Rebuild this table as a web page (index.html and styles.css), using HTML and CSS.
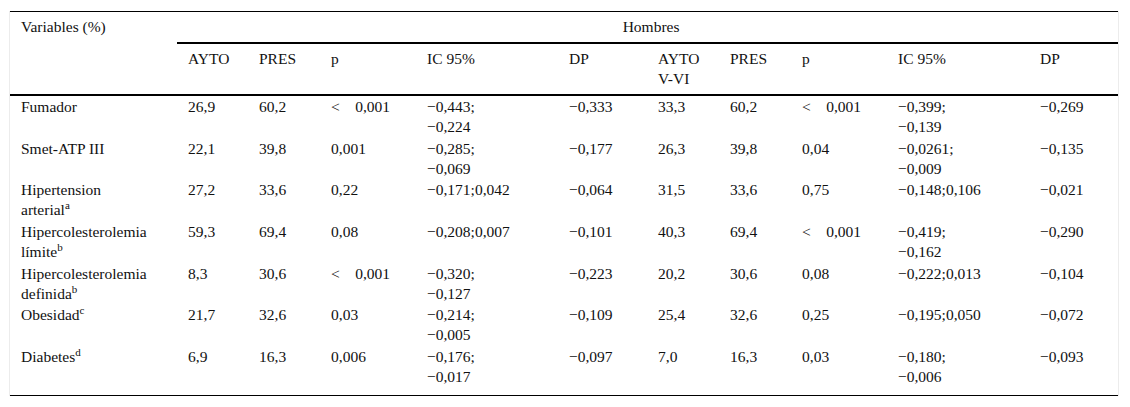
FILE: index.html
```html
<!DOCTYPE html>
<html lang="es">
<head>
<meta charset="utf-8">
<title>Tabla</title>
<link rel="stylesheet" href="styles.css">
</head>
<body>
<div class="wrap">
<table class="data">
  <colgroup>
    <col class="c-var">
    <col class="c-a"><col class="c-b"><col class="c-p"><col class="c-ic"><col class="c-dp">
    <col class="c-b"><col class="c-b"><col class="c-p"><col class="c-ic"><col class="c-dp">
  </colgroup>
  <thead>
    <tr class="h1">
      <th rowspan="2" class="var">Variables (%)</th>
      <th colspan="10" class="group">Hombres</th>
    </tr>
    <tr class="h2">
      <th>AYTO</th><th>PRES</th><th>p</th><th>IC 95%</th><th>DP</th>
      <th>AYTO<br>V-VI</th><th>PRES</th><th>p</th><th>IC 95%</th><th>DP</th>
    </tr>
  </thead>
  <tbody>
    <tr>
      <td>Fumador</td><td>26,9</td><td>60,2</td><td>&lt;&nbsp;&nbsp;&nbsp; 0,001</td><td>−0,443;<br>−0,224</td><td>−0,333</td>
      <td>33,3</td><td>60,2</td><td>&lt;&nbsp;&nbsp;&nbsp; 0,001</td><td>−0,399;<br>−0,139</td><td>−0,269</td>
    </tr>
    <tr>
      <td>Smet-ATP III</td><td>22,1</td><td>39,8</td><td>0,001</td><td>−0,285;<br>−0,069</td><td>−0,177</td>
      <td>26,3</td><td>39,8</td><td>0,04</td><td>−0,0261;<br>−0,009</td><td>−0,135</td>
    </tr>
    <tr>
      <td>Hipertension<br>arterial<sup>a</sup></td><td>27,2</td><td>33,6</td><td>0,22</td><td>−0,171;0,042</td><td>−0,064</td>
      <td>31,5</td><td>33,6</td><td>0,75</td><td>−0,148;0,106</td><td>−0,021</td>
    </tr>
    <tr>
      <td>Hipercolesterolemia<br>límite<sup>b</sup></td><td>59,3</td><td>69,4</td><td>0,08</td><td>−0,208;0,007</td><td>−0,101</td>
      <td>40,3</td><td>69,4</td><td>&lt;&nbsp;&nbsp;&nbsp; 0,001</td><td>−0,419;<br>−0,162</td><td>−0,290</td>
    </tr>
    <tr>
      <td>Hipercolesterolemia<br>definida<sup>b</sup></td><td>8,3</td><td>30,6</td><td>&lt;&nbsp;&nbsp;&nbsp; 0,001</td><td>−0,320;<br>−0,127</td><td>−0,223</td>
      <td>20,2</td><td>30,6</td><td>0,08</td><td>−0,222;0,013</td><td>−0,104</td>
    </tr>
    <tr>
      <td>Obesidad<sup>c</sup></td><td>21,7</td><td>32,6</td><td>0,03</td><td>−0,214;<br>−0,005</td><td>−0,109</td>
      <td>25,4</td><td>32,6</td><td>0,25</td><td>−0,195;0,050</td><td>−0,072</td>
    </tr>
    <tr class="last">
      <td>Diabetes<sup>d</sup></td><td>6,9</td><td>16,3</td><td>0,006</td><td>−0,176;<br>−0,017</td><td>−0,097</td>
      <td>7,0</td><td>16,3</td><td>0,03</td><td>−0,180;<br>−0,006</td><td>−0,093</td>
    </tr>
  </tbody>
</table>
</div>
</body>
</html>
```
FILE: styles.css
```css
html, body {
  margin: 0;
  padding: 0;
  background: #fff;
}

.wrap {
  margin: 11px 0 0 9px;
  width: 1108px;
  border-left: 1px solid #ececec;
  border-right: 1px solid #ececec;
}

.data {
  width: 1108px;
  table-layout: fixed;
  border-collapse: collapse;
  font-family: "Liberation Serif", "Times New Roman", serif;
  font-size: 15.5px;
  line-height: 20px;
  color: #111;
  border-top: 1px solid #000;
  border-bottom: 1px solid #000;
}

.c-var { width: 167px; }
.c-a { width: 71px; }
.c-b { width: 72px; }
.c-p { width: 96px; }
.c-ic { width: 142px; }
.c-dp { width: 89px; }

.data th,
.data td {
  text-align: left;
  vertical-align: top;
  font-weight: normal;
  padding: 1px 4px 0.67px 11px;
  white-space: nowrap;
}

.data thead th {
  padding-top: 5px;
  padding-bottom: 5px;
}

.data th.group {
  text-align: center;
  border-bottom: 2px solid #000;
}

.data tr.h2 th {
  border-bottom: 2px solid #000;
}

.data th.var {
  border-bottom: 2px solid #000;
}

.data tr.last td {
  padding-bottom: 8px;
}

.data sup {
  font-size: 11px;
  line-height: 0;
  vertical-align: 6px;
}
```
